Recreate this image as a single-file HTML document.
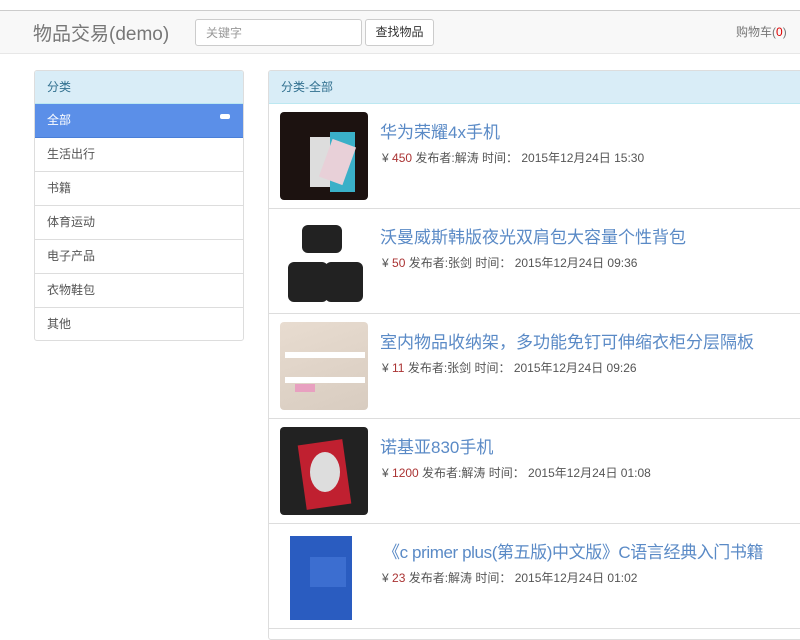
<!DOCTYPE html>
<html><head><meta charset="utf-8"><style>
*{box-sizing:border-box;margin:0;padding:0}
body{width:800px;height:630px;overflow:hidden;background:#fff;font-family:"Liberation Sans","Noto Sans CJK SC",sans-serif;color:#333;font-size:12px;position:relative}
.nav{position:absolute;left:0;top:10px;width:800px;height:44px;background:#f8f8f8;border-top:1px solid #ccc;border-bottom:1px solid #e7e7e7}
.brand{position:absolute;left:33px;top:8px;font-size:19px;color:#777}
.inp{position:absolute;left:195px;top:8px;width:167px;height:27px;border:1px solid #ccc;border-radius:3px;background:#fff;color:#999;font-size:12px;padding:4px 10px}
.btn{position:absolute;left:365px;top:8px;width:69px;height:27px;border:1px solid #ccc;border-radius:3px;background:#fff;font-size:12px;text-align:center;line-height:24px;color:#333}
.cart{position:absolute;left:736px;top:12px;color:#777;font-size:12px}
.cart b{color:#d00;font-weight:normal}
.side{position:absolute;left:34px;top:70px;width:210px;height:271px;border:1px solid #ddd;border-radius:3px;overflow:hidden}
.ph{height:33px;background:#d9edf7;border-bottom:1px solid #bce8f1;color:#31708f;padding:7px 12px}
.si{height:34px;border-bottom:1px solid #ddd;padding:7px 12px;color:#555}
.si.act{background:#5b8fe8;color:#fff;position:relative;border-color:#4a7fd8}
.si.act:after{content:"";position:absolute;right:13px;top:10px;width:10px;height:5px;background:#fff;border-radius:2px}
.main{position:absolute;left:268px;top:70px;width:540px;height:570px;border:1px solid #ddd;border-radius:3px;overflow:hidden}
.it{height:105px;border-bottom:1px solid #ddd;position:relative}
.img{position:absolute;left:11px;top:8px;width:88px;height:88px;border-radius:4px;overflow:hidden}
.t{position:absolute;left:111px;top:14px;font-size:17px;color:#5a8ac6;white-space:nowrap}
.m{position:absolute;left:113px;top:45px;font-size:12px;color:#555}
.m b{color:#a33;font-weight:normal}
</style></head><body>
<div class="nav">
<div class="brand">物品交易(demo)</div>
<div class="inp">关键字</div>
<div class="btn">查找物品</div>
<div class="cart">购物车(<b>0</b>)</div>
</div>
<div class="side">
<div class="ph">分类</div>
<div class="si act">全部</div>
<div class="si">生活出行</div>
<div class="si">书籍</div>
<div class="si">体育运动</div>
<div class="si">电子产品</div>
<div class="si">衣物鞋包</div>
<div class="si" style="border:none">其他</div>
</div>
<div class="main">
<div class="ph">分类-全部</div>
<div class="it"><div class="img" style="background:#1c1210"><div style="position:absolute;left:30px;top:25px;width:28px;height:50px;background:#ddd"></div><div style="position:absolute;left:50px;top:20px;width:25px;height:60px;background:#3ab0c8"></div><div style="position:absolute;left:45px;top:30px;width:25px;height:40px;background:#e8d0d8;transform:rotate(20deg)"></div></div><div class="t">华为荣耀4x手机</div><div class="m">¥ <b>450</b> 发布者:解涛 时间： 2015年12月24日 15:30</div></div>
<div class="it"><div class="img" style="background:#fff"><div style="position:absolute;left:22px;top:8px;width:40px;height:28px;background:#222;border-radius:6px"></div><div style="position:absolute;left:8px;top:45px;width:40px;height:40px;background:#222;border-radius:6px"></div><div style="position:absolute;left:45px;top:45px;width:38px;height:40px;background:#222;border-radius:6px"></div></div><div class="t">沃曼威斯韩版夜光双肩包大容量个性背包</div><div class="m">¥ <b>50</b> 发布者:张剑 时间： 2015年12月24日 09:36</div></div>
<div class="it"><div class="img" style="background:linear-gradient(160deg,#e8dcd0,#d8ccc0)"><div style="position:absolute;left:5px;top:30px;width:80px;height:6px;background:#fff"></div><div style="position:absolute;left:5px;top:55px;width:80px;height:6px;background:#fff"></div><div style="position:absolute;left:15px;top:62px;width:20px;height:8px;background:#e8a0c0"></div></div><div class="t">室内物品收纳架，多功能免钉可伸缩衣柜分层隔板</div><div class="m">¥ <b>11</b> 发布者:张剑 时间： 2015年12月24日 09:26</div></div>
<div class="it"><div class="img" style="background:#222"><div style="position:absolute;left:22px;top:15px;width:45px;height:65px;background:#c02030;transform:rotate(-8deg)"></div><div style="position:absolute;left:30px;top:25px;width:30px;height:40px;background:#ddd;border-radius:50%"></div></div><div class="t">诺基亚830手机</div><div class="m">¥ <b>1200</b> 发布者:解涛 时间： 2015年12月24日 01:08</div></div>
<div class="it"><div class="img" style="background:#fff"><div style="position:absolute;left:10px;top:4px;width:62px;height:84px;background:#2a5cc0"></div><div style="position:absolute;left:30px;top:25px;width:36px;height:30px;background:#3c6ed0"></div></div><div class="t" style="left:114px;letter-spacing:-0.4px">《c primer plus(第五版)中文版》C语言经典入门书籍</div><div class="m">¥ <b>23</b> 发布者:解涛 时间： 2015年12月24日 01:02</div></div>
</div>
</body></html>
